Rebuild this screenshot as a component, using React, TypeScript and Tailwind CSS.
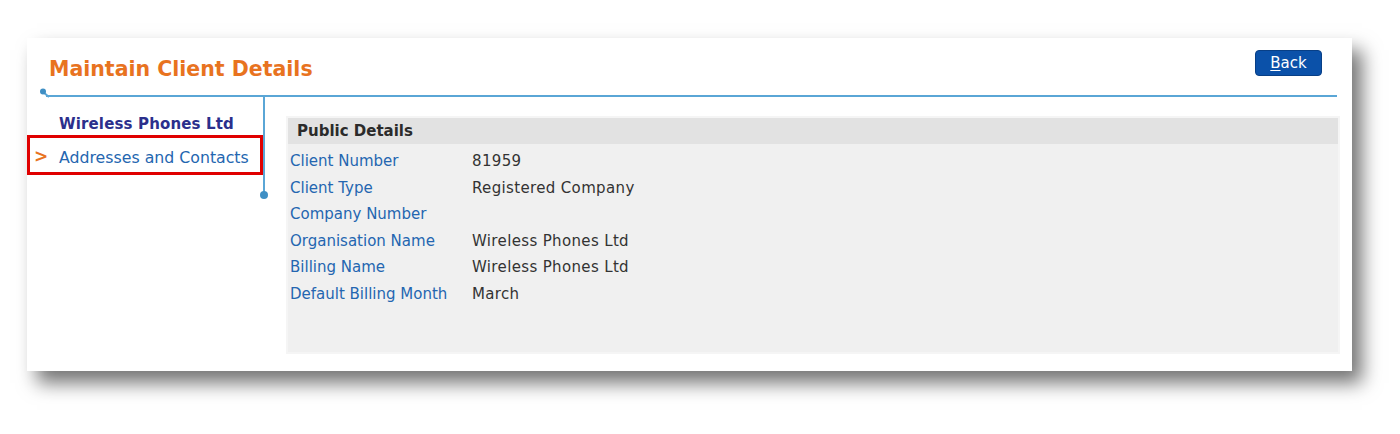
import React from 'react'

const rows: [string, string][] = [
  ['Client Number', '81959'],
  ['Client Type', 'Registered Company'],
  ['Company Number', ''],
  ['Organisation Name', 'Wireless Phones Ltd'],
  ['Billing Name', 'Wireless Phones Ltd'],
  ['Default Billing Month', 'March'],
]

export default function App() {
  return (
    <main className="min-h-screen bg-white pl-[27px] pt-[38px] font-['DejaVu_Sans',Verdana,sans-serif]">
      <div className="w-[1325px] h-[333px] bg-white shadow-[10px_12px_18px_rgba(0,0,0,0.55)] flex flex-col">
        {/* Title bar */}
        <div className="h-[57px] flex items-start justify-between pl-[22px] pr-[30px]">
          <h1 className="mt-[21px] text-[20.5px] font-bold text-[#e8731f] leading-none">Maintain Client Details</h1>
          <button className="mt-[12px] w-[67px] h-[26px] rounded-[4px] bg-[#0b51a9] border border-[#083f86] text-white text-[15px] leading-none">
            <span className="underline underline-offset-2">B</span>ack
          </button>
        </div>

        {/* Divider with corner node */}
        <div className="relative ml-[19px] mr-[15px] border-t-2 border-[#5aa6d6]">
          <svg className="absolute -left-[7px] -top-[9px]" width="14" height="12" viewBox="0 0 14 12">
            <line x1="4" y1="4" x2="10" y2="9" stroke="#5aa6d6" strokeWidth="2" />
            <circle cx="4" cy="3.5" r="3" fill="#3f8fc4" />
          </svg>
        </div>

        <div className="flex flex-1">
          {/* Side navigation */}
          <nav className="w-[236px] flex flex-col">
            <div className="h-[38px] flex items-end pl-[32px] text-[15px] font-bold text-[#2b2f8c] tracking-[0.15px]">
              Wireless Phones Ltd
            </div>
            <div className="h-[40px] border-[3px] border-[#e00000] flex items-center pt-[5px]">
              <span className="w-[29px] pl-[4px] text-[17px] font-bold text-[#e8731f] leading-none -mt-[3px]">&gt;</span>
              <a className="text-[15.75px] text-[#2466b0]">Addresses and Contacts</a>
            </div>
          </nav>

          {/* Vertical connector */}
          <div className="relative h-[100px] border-l-2 border-[#5aa6d6] -mt-[2px]">
            <span className="absolute -left-[5px] -bottom-[4px] w-[8px] h-[8px] rounded-full bg-[#3f8fc4]" />
          </div>

          {/* Public details panel */}
          <section className="ml-[21px] mt-[19px] mb-[17px] w-[1054px] bg-[#f0f0f0] border-2 border-[#f5f5f5] text-[15px]">
            <div className="h-[26px] bg-[#e2e2e2] flex items-center pl-[9px] font-bold text-[#2b2b2b]">
              Public Details
            </div>
            <div className="pt-[4px] pl-[2px]">
              {rows.map(([label, value]) => (
                <div key={label} className="h-[26.6px] flex items-center">
                  <span className="w-[182px] text-[#2466b0]">{label}</span>
                  <span className="text-[#333333] tracking-[0.35px]">{value}</span>
                </div>
              ))}
            </div>
          </section>
        </div>
      </div>
    </main>
  )
}
